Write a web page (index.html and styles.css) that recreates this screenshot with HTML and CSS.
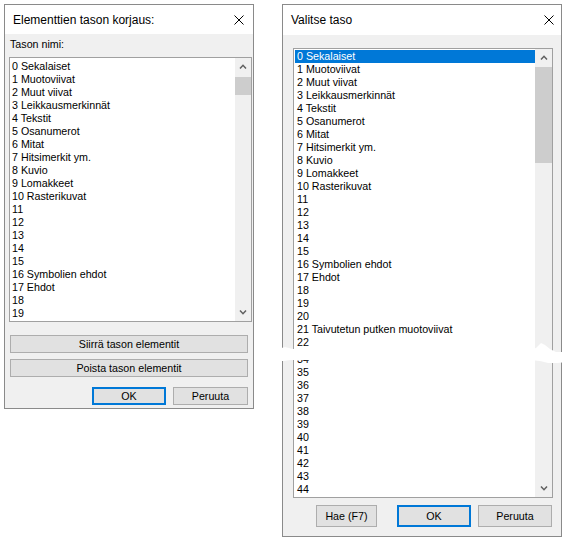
FILE: index.html
```html
<!DOCTYPE html>
<html lang="fi">
<head>
    <meta charset="UTF-8">
    <title>Tasot</title>
    <link rel="stylesheet" href="styles.css">
</head>
<body>
    <div class="desk">
        <div class="dialog dlg-fix">
            <div class="titlebar">
                <span>Elementtien tason korjaus:</span>
                <svg class="close" width="10" height="10" viewBox="0 0 10 10"><path d="M0.5 0.5L9.5 9.5M9.5 0.5L0.5 9.5" stroke="#000" stroke-width="1" fill="none"/></svg>
            </div>
            <div class="body">
                <div class="label">Tason nimi:</div>
                <div class="listbox">
                    <div class="items" id="fixList"></div>
                    <div class="scrollbar">
                        <div class="sb-btn"><svg width="8" height="5" viewBox="0 0 8 5"><polyline points="1,4.5 4,1.3 7,4.5" fill="none" stroke="#606060" stroke-width="1.5"/></svg></div>
                        <div class="sb-track"><div class="thumb"></div></div>
                        <div class="sb-btn"><svg width="8" height="5" viewBox="0 0 8 5"><polyline points="1,0.5 4,3.7 7,0.5" fill="none" stroke="#606060" stroke-width="1.5"/></svg></div>
                    </div>
                </div>
                <button class="btn wide move">Siirrä tason elementit</button>
                <button class="btn wide remove">Poista tason elementit</button>
                <div class="actions">
                    <button class="btn default">OK</button>
                    <button class="btn">Peruuta</button>
                </div>
            </div>
        </div>

        <div class="dialog dlg-pick">
            <div class="titlebar">
                <span>Valitse taso</span>
                <svg class="close" width="10" height="10" viewBox="0 0 10 10"><path d="M0.5 0.5L9.5 9.5M9.5 0.5L0.5 9.5" stroke="#000" stroke-width="1" fill="none"/></svg>
            </div>
            <div class="body">
                <div class="listbox">
                    <div class="items" id="pickList"></div>
                    <div class="scrollbar">
                        <div class="sb-btn"><svg width="8" height="5" viewBox="0 0 8 5"><polyline points="1,4.5 4,1.3 7,4.5" fill="none" stroke="#606060" stroke-width="1.5"/></svg></div>
                        <div class="sb-track"><div class="thumb"></div></div>
                        <div class="sb-btn"><svg width="8" height="5" viewBox="0 0 8 5"><polyline points="1,0.5 4,3.7 7,0.5" fill="none" stroke="#606060" stroke-width="1.5"/></svg></div>
                    </div>
                </div>
                <div class="actions">
                    <button class="btn search">Hae (F7)</button>
                    <button class="btn default">OK</button>
                    <button class="btn">Peruuta</button>
                </div>
            </div>
        </div>

        <!-- repeän kohta: listan keskiosa leikattu pois -->
        <svg class="tear" width="288" height="26" viewBox="0 0 288 26">
            <path d="M0 9 L7 7 L15 9 L25 8 L40 9 L120 8 L200 9 L252 10 L258 8 L263 3 L267 5 L272 9 L278 12 L288 12
                     L288 22 L280 23 L270 23 L262 21 L252 20 L120 20.5 L40 20.5 L22 20 L12 20 L6 21 L0 21 Z" fill="#fff"/>
        </svg>
    </div>

    <script>
        // tasojen nimet, tyhjät numerot näytetään pelkkinä numeroina
        const layerNames = {
            0: 'Sekalaiset', 1: 'Muotoviivat', 2: 'Muut viivat', 3: 'Leikkausmerkinnät',
            4: 'Tekstit', 5: 'Osanumerot', 6: 'Mitat', 7: 'Hitsimerkit ym.',
            8: 'Kuvio', 9: 'Lomakkeet', 10: 'Rasterikuvat', 16: 'Symbolien ehdot',
            17: 'Ehdot', 21: 'Taivutetun putken muotoviivat'
        };

        function addRow(list, n, selected) {
            const row = document.createElement('div');
            row.className = selected ? 'row selected' : 'row';
            row.textContent = layerNames[n] ? n + ' ' + layerNames[n] : String(n);
            list.appendChild(row);
        }

        const fixList = document.getElementById('fixList');
        for (let i = 0; i <= 19; i++) addRow(fixList, i, false);

        const pickList = document.getElementById('pickList');
        for (let i = 0; i <= 22; i++) addRow(pickList, i, i === 0);
        const cut = document.createElement('div');
        cut.className = 'cut';
        pickList.appendChild(cut);
        for (let i = 34; i <= 44; i++) addRow(pickList, i, false);
    </script>
</body>
</html>
```

FILE: styles.css
```css
* {
    box-sizing: border-box;
}
body {
    margin: 0;
    background: #fff;
    font-family: "Liberation Sans", Arial, sans-serif;
    font-size: 10.7px;
    color: #000;
}
.desk {
    position: relative;
    display: flex;
    align-items: flex-start;
    gap: 28px;
    padding: 4px 0 0 4px;
}
.dialog {
    border: 1px solid #8a8a8a;
    background: #f0f0f0;
    display: flex;
    flex-direction: column;
}
.dlg-fix {
    width: 250px;
    height: 405px;
}
.dlg-pick {
    width: 280px;
    height: 533px;
}
.titlebar {
    background: #fff;
    display: flex;
    align-items: center;
    justify-content: space-between;
    padding-left: 8px;
    font-size: 12px;
}
.dlg-fix .titlebar {
    height: 29px;
    padding-right: 9px;
}
.dlg-pick .titlebar {
    height: 30px;
    padding-right: 7px;
}
.body {
    flex: 1;
    display: flex;
    flex-direction: column;
}
.dlg-fix .body {
    padding: 4px 1px 3px 4px;
}
.dlg-pick .body {
    padding: 13px 8px 0 10px;
}
.label {
    line-height: 13px;
    padding-left: 1px;
}

/* listat */
.listbox {
    border: 1px solid #a0a0a0;
    background: #fff;
    display: flex;
}
.dlg-fix .listbox {
    margin-top: 6px;
    height: 265px;
    width: 243px;
}
.dlg-pick .listbox {
    height: 450px;
}
.items {
    flex: 1;
    overflow: hidden;
}
.dlg-fix .items {
    padding-top: 2px;
}
.dlg-pick .items {
    padding: 1px 0 0 1px;
}
.row {
    height: 13px;
    line-height: 13px;
    padding-left: 2px;
    white-space: nowrap;
}
.row.selected {
    background: #0078d7;
    color: #fff;
}
.cut {
    height: 4px;
}
.scrollbar {
    width: 16px;
    background: #f0f0f0;
    display: flex;
    flex-direction: column;
}
.dlg-pick .scrollbar {
    width: 17px;
}
.sb-btn {
    height: 17px;
    display: flex;
    align-items: center;
    justify-content: center;
}
.sb-track {
    flex: 1;
}
.thumb {
    background: #cdcdcd;
}
.dlg-fix .thumb {
    margin-top: 2px;
    height: 18px;
}
.dlg-pick .thumb {
    margin-top: 1px;
    height: 96px;
}

/* painikkeet */
.btn {
    font: inherit;
    color: #000;
    background: #e1e1e1;
    border: 1px solid #adadad;
    padding: 0;
}
.btn.default {
    border: 2px solid #0078d7;
}
.wide {
    height: 18px;
    margin: 0 4px 0 1px;
}
.move {
    margin-top: 13px;
}
.remove {
    margin-top: 6px;
}
.actions {
    display: flex;
    justify-content: flex-end;
    gap: 7px;
}
.dlg-fix .actions {
    margin-top: 10px;
    padding-right: 4px;
}
.dlg-fix .actions .btn {
    height: 18px;
    width: 74px;
}
.dlg-fix .actions .btn:last-child {
    width: 75px;
}
.dlg-pick .actions {
    margin-top: 7px;
    padding-right: 1px;
}
.dlg-pick .actions .btn {
    height: 22px;
    width: 74px;
}
.dlg-pick .actions .search {
    width: 61px;
    margin-right: 13px;
}

.tear {
    position: absolute;
    left: 278px;
    top: 340px;
}
```
